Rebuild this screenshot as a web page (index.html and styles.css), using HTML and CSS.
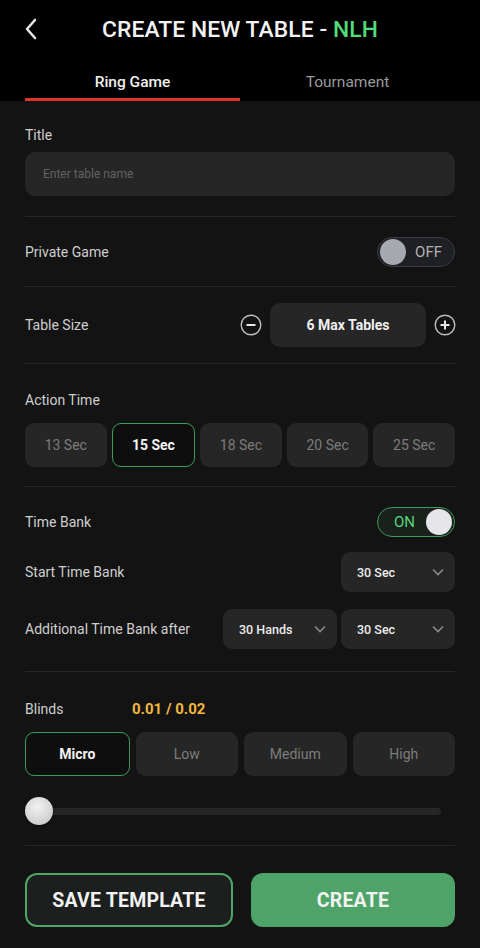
FILE: index.html
```html
<!DOCTYPE html>
<html>
<head>
<meta charset="utf-8">
<link rel="stylesheet" href="styles.css">
</head>
<body>
<div class="app">
  <header class="top">
    <div class="titlebar">
      <svg class="back" width="14" height="22" viewBox="0 0 14 22"><path d="M11 2 L3 11 L11 20" fill="none" stroke="#e6e6e6" stroke-width="2.6" stroke-linecap="round" stroke-linejoin="round"/></svg>
      <h1 class="title">CREATE NEW TABLE - <span class="green">NLH</span></h1>
    </div>
    <nav class="tabs">
      <div class="tab active">Ring Game</div>
      <div class="tab">Tournament</div>
    </nav>
  </header>
  <main class="content">
    <section class="sec sec-title">
      <div class="label">Title</div>
      <div class="input">Enter table name</div>
    </section>
    <section class="sec row">
      <div class="label">Private Game</div>
      <div class="toggle off"><span class="knob"></span><span class="tlabel">OFF</span></div>
    </section>
    <section class="sec row sec-size">
      <div class="label">Table Size</div>
      <div class="stepper">
        <svg class="circ" width="22" height="22" viewBox="0 0 22 22"><circle cx="11" cy="11" r="9.8" fill="none" stroke="#bdbdbd" stroke-width="1.4"/><path d="M6.5 11 H15.5" stroke="#e8e8e8" stroke-width="2"/></svg>
        <div class="stepval">6 Max Tables</div>
        <svg class="circ" width="22" height="22" viewBox="0 0 22 22"><circle cx="11" cy="11" r="9.8" fill="none" stroke="#bdbdbd" stroke-width="1.4"/><path d="M6.5 11 H15.5 M11 6.5 V15.5" stroke="#e8e8e8" stroke-width="2"/></svg>
      </div>
    </section>
    <section class="sec sec-action">
      <div class="label">Action Time</div>
      <div class="chips five">
        <div class="chip">13 Sec</div>
        <div class="chip sel">15 Sec</div>
        <div class="chip">18 Sec</div>
        <div class="chip">20 Sec</div>
        <div class="chip">25 Sec</div>
      </div>
    </section>
    <section class="sec sec-bank">
      <div class="row">
        <div class="label">Time Bank</div>
        <div class="toggle on"><span class="tlabel">ON</span><span class="knob"></span></div>
      </div>
      <div class="row r2">
        <div class="label">Start Time Bank</div>
        <div class="drop">30 Sec<svg width="12" height="8" viewBox="0 0 12 8"><path d="M1 1.5 L6 6.5 L11 1.5" fill="none" stroke="#8a8a8a" stroke-width="1.6"/></svg></div>
      </div>
      <div class="row r3">
        <div class="label">Additional Time Bank after</div>
        <div class="drops">
          <div class="drop">30 Hands<svg width="12" height="8" viewBox="0 0 12 8"><path d="M1 1.5 L6 6.5 L11 1.5" fill="none" stroke="#8a8a8a" stroke-width="1.6"/></svg></div>
          <div class="drop">30 Sec<svg width="12" height="8" viewBox="0 0 12 8"><path d="M1 1.5 L6 6.5 L11 1.5" fill="none" stroke="#8a8a8a" stroke-width="1.6"/></svg></div>
        </div>
      </div>
    </section>
    <section class="sec sec-blinds">
      <div class="blindhead"><span class="label">Blinds</span><span class="bval">0.01 / 0.02</span></div>
      <div class="chips four">
        <div class="chip sel">Micro</div>
        <div class="chip">Low</div>
        <div class="chip">Medium</div>
        <div class="chip">High</div>
      </div>
      <div class="slider"><span class="sknob"></span></div>
    </section>
    <section class="actions">
      <button class="btn ghost">SAVE TEMPLATE</button>
      <button class="btn primary">CREATE</button>
    </section>
  </main>
</div>
</body>
</html>
```

FILE: styles.css
```css
* { box-sizing: border-box; margin: 0; padding: 0; }
html, body { background: #131313; }
body { font-family: Roboto, "Noto Sans", Arial, sans-serif; color: #d0d0d0; width: 480px; height: 948px; overflow: hidden; }
.app { width: 480px; height: 948px; display: flex; flex-direction: column; }
.top { background: #000; height: 101px; }
.titlebar { height: 60px; display: flex; align-items: center; justify-content: center; position: relative; }
.back { position: absolute; left: 24px; top: 18px; }
.title { font-size: 22.8px; font-weight: 500; color: #f2f2f2; letter-spacing: 0.1px; margin-top: -2px; }
.green { color: #52d978; }
.tabs { display: flex; padding: 0 25px; height: 41px; }
.tab { flex: 1; text-align: center; font-size: 15.5px; color: #9a9a9a; padding-top: 13px; }
.tab.active { color: #f0f0f0; font-weight: 500; border-bottom: 3px solid #e03325; }
.content { flex: 1; padding: 0 25px; display: flex; flex-direction: column; }
.sec { border-bottom: 1px solid #272727; }
.label { font-size: 14px; color: #cfcfcf; }
.sec-title { padding-top: 26px; padding-bottom: 20px; }
.input { margin-top: 9px; height: 44px; background: #262626; border-radius: 10px; padding-left: 18px; display: flex; align-items: center; font-size: 12px; color: #626262; }
.row { display: flex; align-items: center; justify-content: space-between; }
.sec.row { height: 70px; }
.sec-size { height: 77px !important; }
.toggle { width: 78px; height: 30px; border-radius: 15px; border: 1.5px solid #3a3d44; background: #1e2024; display: flex; align-items: center; padding: 0 2px; justify-content: space-between; }
.toggle .knob { width: 26px; height: 26px; border-radius: 50%; background: #a8a8b0; }
.toggle .tlabel { font-size: 15px; color: #b0b0b4; margin-right: 10px; }
.toggle.on { border-color: #3c9a57; background: #1a201c; }
.toggle.on .knob { background: #e6e6ea; }
.toggle.on .tlabel { color: #55d67b; margin-left: 14px; margin-right: 0; }
.stepper { display: flex; align-items: center; gap: 8px; margin-right: -1px; }
.stepval { width: 156px; height: 44px; background: #262626; border-radius: 10px; display: flex; align-items: center; justify-content: center; font-size: 14px; font-weight: 700; color: #f0f0f0; }
.sec-action { padding-top: 28px; padding-bottom: 19px; }
.chips { display: flex; margin-top: 15px; }
.chips.five { gap: 5px; }
.chips.four { gap: 6px; margin-top: 14px; }
.chip { flex: 1; height: 44px; background: #262626; border-radius: 9px; display: flex; align-items: center; justify-content: center; font-size: 14px; color: #7c7c7c; }
.chip.sel { background: #0e0e0e; border: 1.5px solid #3f9a5a; color: #f4f4f4; font-weight: 700; }
.sec-bank { padding-top: 20px; padding-bottom: 22px; }
.sec-bank .row:first-child { height: 30px; }
.r2 { margin-top: 15px; height: 40px; }
.r3 { margin-top: 17px; height: 40px; }
.drops { display: flex; gap: 4px; }
.drop { width: 114px; height: 40px; background: #262626; border-radius: 9px; display: flex; align-items: center; justify-content: space-between; padding: 0 11px 0 16px; font-size: 12.5px; font-weight: 500; color: #ececec; }
.sec-blinds { padding-top: 28px; padding-bottom: 30px; }
.blindhead { display: flex; align-items: baseline; }
.blindhead .label { width: 107px; }
.bval { font-size: 15px; font-weight: 700; color: #f0b73f; }
.slider { position: relative; margin-top: 32px; width: 416px; height: 7px; border-radius: 4px; background: #262626; }
.sknob { position: absolute; left: 0; top: -11px; width: 28px; height: 28px; border-radius: 50%; background: radial-gradient(circle at 45% 35%, #f2f2f2, #cfcfcf 70%, #b0b0b0); box-shadow: 0 1px 2px rgba(0,0,0,.6); }
.actions { display: flex; gap: 18px; padding-top: 27px; }
.btn { flex: 1; height: 54px; border-radius: 12px; font-family: Roboto, Arial, sans-serif; font-size: 19.5px; font-weight: 700; color: #f2f2f2; letter-spacing: 0.2px; }
.btn.ghost { background: #1c1f1e; border: 2px solid #4ea567; }
.btn.primary { background: #4ea468; border: none; }
```
